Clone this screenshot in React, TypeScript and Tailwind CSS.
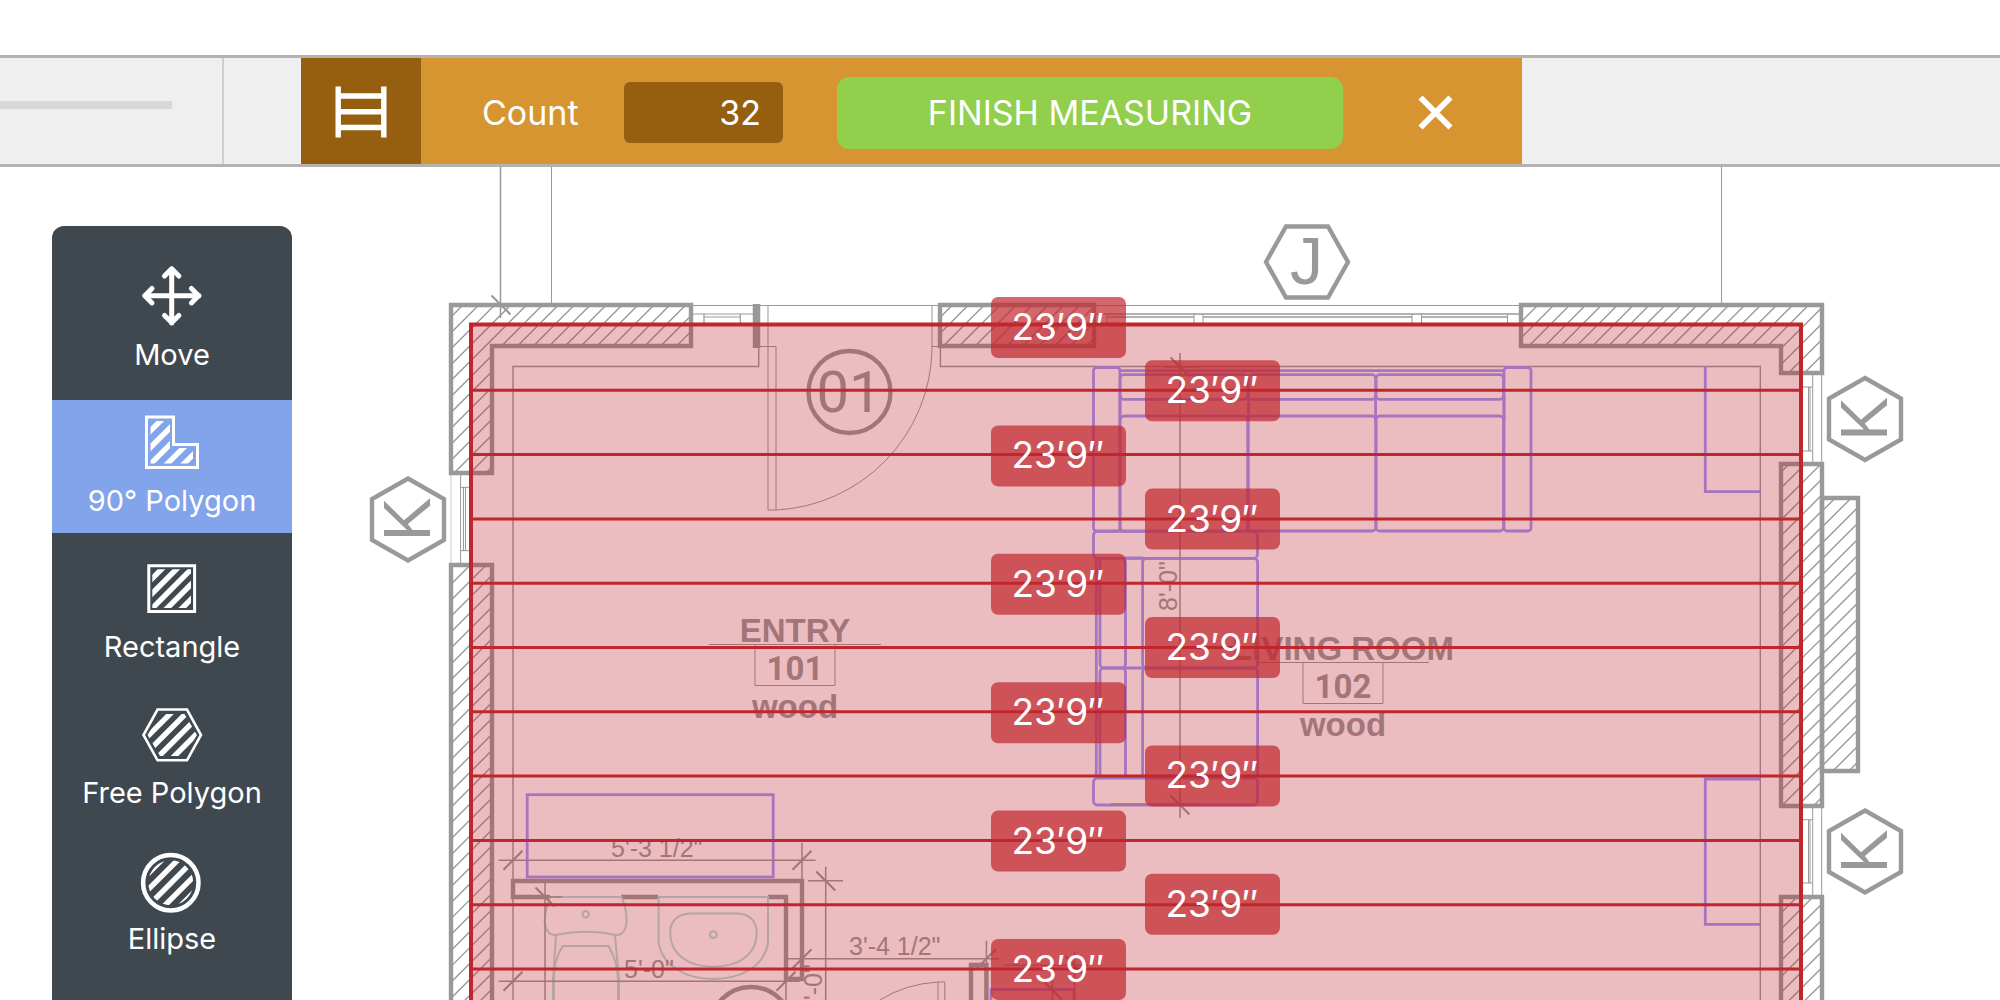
import { useState } from "react";
import type { ReactNode } from "react";

const GRAY = "#999999";
const PURPLE = "#9c98ff";
const FIXTURE = "#b4dcd4";
const RED = "#c0272d";

type StripedIconProps = {
  id: string;
  outline: string;
  inset: string;
  start: number;
  pitch: number;
  strokeWidth?: number;
};

function StripedIcon({ id, outline, inset, start, pitch, strokeWidth = 3 }: StripedIconProps) {
  return (
    <svg viewBox="0 0 64 64" className="size-16" fill="none" stroke="white" aria-hidden="true">
      <clipPath id={id}>
        <path d={inset} />
      </clipPath>
      <path d={outline} strokeWidth={strokeWidth} />
      <g clipPath={`url(#${id})`} strokeWidth={5.4}>
        {[0, 1, 2, 3, 4, 5].map((i) => {
          const c = start + i * pitch;
          return <line key={i} x1={c} y1={0} x2={c - 64} y2={64} />;
        })}
      </g>
    </svg>
  );
}

function MoveIcon() {
  return (
    <svg
      viewBox="0 0 64 64"
      className="size-16"
      fill="none"
      stroke="white"
      strokeWidth={5}
      strokeLinecap="round"
      strokeLinejoin="round"
      aria-hidden="true"
    >
      <path d="M31.7 4v54M5 30.7h54" />
      <path d="M24.5 11l7.2-7.2 7.2 7.2M24.5 50.4l7.2 7.2 7.2-7.2M12 23.5l-7.2 7.2 7.2 7.2M51.4 23.5l7.2 7.2-7.2 7.2" />
    </svg>
  );
}

const tools: { name: string; icon: ReactNode }[] = [
  { name: "Move", icon: <MoveIcon /> },
  {
    name: "90° Polygon",
    icon: (
      <StripedIcon
        id="tool-polygon"
        outline="M6.5 6H33.5V33.5H57.5V56.5H6.5Z"
        inset="M10.5 10H30V37H53V52.5H10.5Z"
        start={30.3}
        pitch={16.6}
      />
    ),
  },
  {
    name: "Rectangle",
    icon: (
      <StripedIcon
        id="tool-rectangle"
        outline="M8.8 8.8H54.6V54.6H8.8Z"
        inset="M12.3 12.3H51V51H12.3Z"
        start={33.7}
        pitch={14.9}
      />
    ),
  },
  {
    name: "Free Polygon",
    icon: (
      <StripedIcon
        id="tool-free-polygon"
        outline="M3.5 32L17.5 6.5H47L61 32L47 57.3H17.5Z"
        inset="M7.5 32L20 11H44.5L57 32L44.5 53H20Z"
        start={41}
        pitch={15.5}
        strokeWidth={2.6}
      />
    ),
  },
  {
    name: "Ellipse",
    icon: (
      <StripedIcon
        id="tool-ellipse"
        outline="M3.1 33.8a27.7 27.7 0 1 0 55.4 0a27.7 27.7 0 1 0-55.4 0Z"
        inset="M8.3 33.8a22.5 22.5 0 1 0 45 0a22.5 22.5 0 1 0-45 0Z"
        start={32.6}
        pitch={16.2}
        strokeWidth={4.5}
      />
    ),
  },
];

// box is the wall's left, top, right and bottom; phase is the x + y of one of its hatch lines.
const walls = [
  { id: "wall-tl", d: "M451 305H691V346H492V473H451Z", box: [451, 305, 691, 473], phase: 767.9 },
  { id: "wall-top", d: "M940 305H1094V346H940Z", box: [940, 305, 1094, 346], phase: 1273.4 },
  { id: "wall-tr", d: "M1521 305H1822V373H1781V346H1521Z", box: [1521, 305, 1822, 373], phase: 1843 },
  { id: "wall-l", d: "M451 565H492V1100H451Z", box: [451, 565, 492, 1100], phase: 1035.3 },
  { id: "wall-r", d: "M1781 464H1822V806H1781Z", box: [1781, 464, 1822, 806], phase: 2285 },
  { id: "chimney", d: "M1822 498H1858V771H1822Z", box: [1822, 498, 1858, 771], phase: 2333.3 },
  { id: "wall-br", d: "M1781 897H1822V1100H1781Z", box: [1781, 897, 1822, 1100], phase: 2694 },
];

function hatch([left, top, right, bottom]: number[], phase: number) {
  const step = 15.92;
  const height = bottom - top;
  let d = "";
  for (let c = left + top + ((phase - left - top) % step); c < right + bottom; c += step) {
    d += `M${c - top} ${top}l${-height} ${height}`;
  }
  return d;
}

function Walls() {
  return (
    <g stroke={GRAY} fill="none">
      {walls.map(({ id, d, box, phase }) => (
        <g key={id}>
          <clipPath id={id}>
            <path d={d} />
          </clipPath>
          <path d={hatch(box, phase)} clipPath={`url(#${id})`} strokeWidth={1.4} />
          <path d={d} strokeWidth={4.4} />
        </g>
      ))}
      <path d="M756.5 304V348" strokeWidth={7.5} />
    </g>
  );
}

function GridTag({ x, y }: { x: number; y: number }) {
  return (
    <g transform={`translate(${x} ${y})`}>
      <path d="M0 -41L36 -20.5V20.5L0 41L-36 20.5V-20.5Z" fill="none" stroke={GRAY} strokeWidth={4.4} />
      <text transform="translate(22 22) rotate(-90)" className="font-['Liberation_Sans',sans-serif] text-[66px]">
        K
      </text>
    </g>
  );
}

function RoomLabel({ x, y, name, number }: { x: number; y: number; name: string; number: string }) {
  return (
    <g
      transform={`translate(${x} ${y})`}
      textAnchor="middle"
      className="font-['Liberation_Sans',sans-serif] text-[33px] font-bold"
    >
      <text>{name}</text>
      <path d="M-86 2.5H86M-40 2.5V43.5H40V2.5" fill="none" stroke={GRAY} strokeWidth={1} />
      <text y={38} className="font-[Roboto,sans-serif]">
        {number}
      </text>
      <text y={76}>wood</text>
    </g>
  );
}

// Slanted strokes that mark the ends of dimension lines.
function Ticks({ at, down = false }: { at: [number, number][]; down?: boolean }) {
  return (
    <g strokeWidth={2.2}>
      {at.map(([x, y]) => (
        <path key={`${x}-${y}`} d={down ? `M${x - 9.5} ${y - 9.5}l19 19` : `M${x - 9.5} ${y + 9.5}l19 -19`} />
      ))}
    </g>
  );
}

function Dimensions() {
  return (
    <g>
      <g stroke={GRAY} fill="none" strokeWidth={1.5}>
        <path d="M500.5 160V318" />
        <path d="M551.5 160V305M1721.5 160V305" strokeWidth={1} />
        <path d="M1180 353V818M1165 367H1198M1111 804H1198" />
        <path d="M498.6 860.3H815.6M802 843V880" />
        <path d="M825.7 866.7V1100M808 880.7H843" />
        <path d="M545 883V1100M513 897H562" />
        <path d="M787.8 958.7H999M986.4 940.7V963" />
        <path d="M498.6 981.3H799.6M786 979V1100" />
        <path d="M1004 965.3H1088M1074.5 951V1100M1052.4 977V1100" />
        <Ticks
          at={[
            [513, 860.3],
            [802, 860.3],
            [802, 958.7],
            [986.4, 958.7],
            [513, 981.3],
            [786, 981.3],
          ]}
        />
        <Ticks
          down
          at={[
            [501, 305],
            [1180, 367],
            [1180, 805],
            [825.7, 881],
            [545, 897],
            [1074.5, 965.3],
            [1052.4, 990],
          ]}
        />
      </g>
      <g className="font-['Liberation_Sans',sans-serif] text-[25px]">
        <text x={611} y={857}>5'-3 1/2"</text>
        <text x={849} y={955}>3'-4 1/2"</text>
        <text x={624} y={978}>5'-0"</text>
        <text transform="translate(1177 611) rotate(-90)">8'-0"</text>
        <text transform="translate(822 1014) rotate(-90)">8'-0"</text>
      </g>
    </g>
  );
}

function Openings() {
  return (
    <g stroke={GRAY} fill="none" strokeWidth={1}>
      <path d="M691 305.5H940M1094 305.5H1521" />
      <path d="M691 314H753M704 314V323M740.3 314V323M704 317H740.3" strokeWidth={1.2} />
      <path d="M1094 314H1521M1107 317H1194M1203 317H1412M1421.5 317H1507.5" strokeWidth={1.6} />
      <path d="M1107 314V323M1194 314V323M1203 314V323M1412 314V323M1421.5 314V323M1507.5 314V323" />
      <path d="M460.6 473V565M460.6 487.3H470M460.6 550.7H470M463.5 487V551M465.5 487V551" />
      <path d="M451 473V565" strokeOpacity={0.5} />
      <path d="M1821.7 373V464M1812.7 373V464M1803 387H1812.7M1803 451H1812.7M1810 387V451M1808.5 387V451" />
      <path d="M1821.7 806V897M1812.7 806V897M1803 819.7H1812.7M1803 883H1812.7M1810 820V883M1808.5 820V883" />

      {/* entry door */}
      <path d="M768 305V510H776V346.5H760M776 510A164 164 0 0 0 932 350V305M932 346.5H940" />
      {/* inside face of the walls */}
      <path d="M758.7 348V366.5H513V1100M940.4 348V366.5H1760.3V1100" strokeWidth={1.4} />
    </g>
  );
}

function Furniture() {
  return (
    <g fill="none">
      <g stroke={PURPLE} strokeWidth={2.8}>
        {/* sofa */}
        <rect x={1093.5} y={367.5} width={26.5} height={163.5} rx={3} />
        <rect x={1504} y={367.5} width={27} height={163.5} rx={3} />
        <path d="M1120 370.7H1504M1248.5 395V420M1375.6 395V420M1120 395V420M1504 395V420" />
        {[1120, 1248.2, 1375.8].map((x) => (
          <g key={x}>
            <rect x={x} y={374.7} width={127.8} height={24.6} rx={4} />
            <rect x={x} y={416} width={127.8} height={115} rx={4} />
          </g>
        ))}
        {/* loveseat */}
        <rect x={1093.5} y={531.3} width={164} height={27} rx={4} />
        <rect x={1093.5} y={778} width={164} height={27} rx={4} />
        <path d="M1096.3 558V778M1125 558H1143M1125 668H1143M1125 777H1143" />
        {[558.3, 668].map((y) => (
          <g key={y}>
            <rect x={1100} y={y} width={25.5} height={109.7} rx={4} />
            <rect x={1142.6} y={y} width={115} height={109.7} rx={4} />
          </g>
        ))}
        {/* side tables */}
        <path d="M1761 491.7H1705.3V366M1761 779H1705.3V924.3H1761" />
        <rect x={527.2} y={794.7} width={246} height={82.3} />
        <rect x={991} y={989.5} width={83} height={100} />
      </g>

      {/* bathroom walls */}
      <g stroke={GRAY} strokeWidth={4.4}>
        <path d="M550 897H513V881H802V979H786V897H768M658 897H621" />
        <path d="M971 1100V965H986.4V1100" />
        <circle cx={751} cy={1028} r={41} />
        <path d="M880 1000Q905 984 938 982V1100M938 982H944.8V1100" strokeWidth={1} />
      </g>

      <g stroke={FIXTURE} strokeWidth={2}>
        <path d="M550 897C545 912 544 920 545 924C546 931 549 935 555 935C575 931 598 931 616 935C622 935 626 930 626.5 922C627 912 625 906 621.5 897Z" />
        <circle cx={585.7} cy={914.3} r={3.2} />
        <path d="M556 935L553 980V1100M615 935L619 980V1100" />
        <path d="M554 1100V975Q555 958 562.6 946H608.5Q618 962 618 980V1100" />
        <path d="M658.6 897H768V943C764 967 740 979 713.3 979C687 979 663 967 658.6 943Z" />
        <path d="M690 913.5H738C750 914 756.6 922 756.6 932C757 955 738 966.7 713.3 966.7C689 966.7 670 955 670.3 932C670 922 677 914 690 913.5Z" />
        <circle cx={713.3} cy={934.7} r={3.4} />
      </g>
    </g>
  );
}

function FloorPlan() {
  return (
    <g fill={GRAY}>
      <Openings />
      <Furniture />
      <Walls />
      <Dimensions />

      <circle cx={849.5} cy={392} r={41} fill="none" stroke={GRAY} strokeWidth={4.4} />
      <text x={849} y={412} textAnchor="middle" className="font-[Roboto,sans-serif] text-[58px]">
        01
      </text>

      <path
        d="M1266 262L1286 226.5H1328L1348 262L1328 297.5H1286Z"
        fill="none"
        stroke={GRAY}
        strokeWidth={4.4}
      />
      <text x={1290} y={284} className="font-['Liberation_Sans',sans-serif] text-[66px]">
        J
      </text>
      <GridTag x={408} y={519.5} />
      <GridTag x={1865} y={419} />
      <GridTag x={1865} y={851.5} />

      <RoomLabel x={795} y={642} name="ENTRY" number="101" />
      <RoomLabel x={1343} y={660} name="LIVING ROOM" number="102" />
    </g>
  );
}

function Joists() {
  const spacing = 64.3;
  const rows = Array.from({ length: 11 }, (_, i) => i);
  return (
    <g>
      <rect x={471} y={324.5} width={1330} height={800} fill="#bc232d" fillOpacity={0.3} />
      <rect x={471} y={324.5} width={1330} height={800} fill="none" stroke={RED} strokeWidth={4} />
      {rows.slice(1).map((i) => (
        <path key={i} d={`M471 ${326 + i * spacing}H1801`} stroke={RED} strokeWidth={3} />
      ))}
      {rows.map((i) => (
        <g key={i} transform={`translate(${i % 2 ? 1145 : 991} ${297 + i * 64.2 - (i % 2)})`}>
          <rect width={135} height={61} rx={7} fill={RED} fillOpacity={0.7} />
          <text x={67} y={43} textAnchor="middle" fill="white" className="font-[Inter,sans-serif] text-[37px]">
            23′9″
          </text>
        </g>
      ))}
    </g>
  );
}

function Toolbar() {
  const [count, setCount] = useState("32");
  return (
    <header className="mt-[55px] flex h-28 shrink-0 border-y-3 border-[#b2b2b2] bg-[#efefef]">
      <div className="flex w-[224px] items-center overflow-hidden border-r-2 border-[#cfcfcf] pb-3">
        <input
          type="range"
          aria-label="Zoom"
          defaultValue={0}
          className="-ml-10 h-2 w-[212px] shrink-0 appearance-none bg-[#d8d8d8]"
        />
      </div>
      <div className="ml-[77px] flex w-[120px] items-center justify-center bg-[#965f10] pt-0.5">
        <svg viewBox="0 0 52 52" className="size-[52px]" stroke="white" strokeWidth={5.4} aria-hidden="true">
          <path d="M3.2 0.5V51.5M48.8 0.5V51.5M3 10H49M3 25.7H49M3 41.5H49" />
        </svg>
      </div>
      <div className="flex items-center bg-[#d69531] pr-[66px] pt-[3px] text-[34px] text-white">
        <label htmlFor="count" className="w-[203px] pl-[61px]">
          Count
        </label>
        <input
          id="count"
          value={count}
          onChange={(e) => setCount(e.target.value)}
          className="h-[61px] w-[159px] rounded-md bg-[#965f10] pr-[22px] text-right outline-none"
        />
        <button type="button" className="ml-[54px] h-[72px] w-[506px] rounded-xl bg-[#91cf4c]">
          FINISH MEASURING
        </button>
        <button type="button" aria-label="Close" className="ml-[73px] size-10">
          <svg viewBox="0 0 40 40" className="size-10" stroke="white" strokeWidth={5.8} aria-hidden="true">
            <path d="M4.5 4.5L34.5 34.5M34.5 4.5L4.5 34.5" />
          </svg>
        </button>
      </div>
    </header>
  );
}

function ToolPanel() {
  const [active, setActive] = useState("90° Polygon");
  return (
    <nav className="relative ml-[52px] mt-[59px] flex w-60 flex-col gap-[13px] self-start rounded-xl bg-[#40484f] pb-24 pt-7">
      {tools.map(({ name, icon }) => (
        <button
          key={name}
          type="button"
          onClick={() => setActive(name)}
          className={`flex h-[133px] flex-col items-center gap-1.5 pt-[11px] text-[29px] leading-10 text-white ${
            active === name ? "bg-[#82a4ea]" : ""
          }`}
        >
          {icon}
          {name}
        </button>
      ))}
    </nav>
  );
}

export default function App() {
  return (
    <div className="flex h-screen flex-col overflow-hidden bg-white font-[Inter,sans-serif]">
      <Toolbar />
      <main className="relative flex min-h-0 flex-1">
        <svg
          viewBox="0 167 2000 833"
          preserveAspectRatio="xMinYMin slice"
          className="absolute inset-0 size-full"
          role="img"
          aria-label="Floor plan"
        >
          <FloorPlan />
          <Joists />
        </svg>
        <ToolPanel />
      </main>
    </div>
  );
}
